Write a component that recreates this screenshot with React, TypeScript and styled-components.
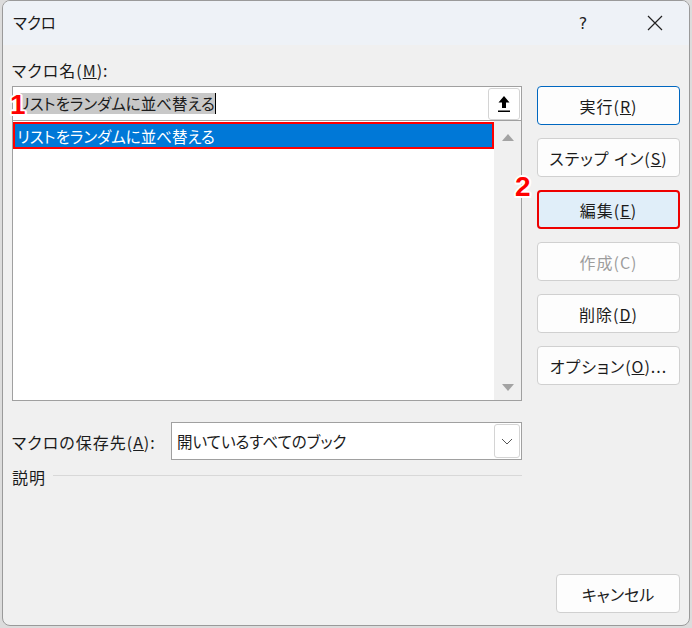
import React from "react";
import styled, { createGlobalStyle } from "styled-components";

const Global = createGlobalStyle`
  html, body { margin: 0; padding: 0; }
  body {
    background: #dcdcdc;
    font-family: "Noto Sans CJK JP", "Noto Sans", sans-serif;
    font-feature-settings: "palt";
    color: #1b1b1b;
  }
  #root { width: 692px; height: 628px; }
`;

const Window = styled.div`
  box-sizing: border-box;
  margin: 0 2px 2px 2px;
  width: 688px;
  height: 626px;
  border: 1px solid #9a9a9a;
  border-radius: 8px;
  background: #f0f0f0;
  display: flex;
  flex-direction: column;
  overflow: hidden;
`;

const TitleBar = styled.div`
  height: 44px;
  background: #eef2f7;
  display: flex;
  align-items: center;
  padding-left: 10px;
  font-size: 15.5px;
  flex: none;
`;

const Title = styled.div`
  flex: 1;
  padding-bottom: 2px;
`;

const TitleButton = styled.div<{ $w: number }>`
  width: ${(p) => p.$w}px;
  height: 44px;
  display: flex;
  align-items: center;
  justify-content: center;
  font-family: "DejaVu Sans", sans-serif;
  font-size: 16px;
  color: #222;
`;

const Body = styled.div`
  position: relative;
  flex: 1;
  display: flex;
  padding: 0 9px 0 9px;
  gap: 15px;
`;

const Left = styled.div`
  width: 510px;
  display: flex;
  flex-direction: column;
  padding-top: 14px;
`;

const Right = styled.div`
  width: 143px;
  display: flex;
  flex-direction: column;
  padding-top: 41px;
  gap: 13px;
`;

const Label = styled.div`
  font-size: 16px;
  letter-spacing: 1px;
  line-height: 22px;
  height: 22px;
  margin-bottom: 5px;
`;

const NameInput = styled.div`
  box-sizing: border-box;
  height: 34px;
  border: 1px solid #a0a0a0;
  border-bottom: none;
  background: #fff;
  display: flex;
  align-items: center;
  padding-left: 4px;
  padding-right: 1px;
`;

const Selection = styled.span`
  background: #c8c8c8;
  font-size: 15.5px;
  line-height: 21px;
  height: 21px;
  display: inline-block;
`;

const Caret = styled.span`
  display: inline-block;
  width: 1px;
  height: 21px;
  background: #000;
`;

const Spacer = styled.div`
  flex: 1;
`;

const UpButton = styled.div`
  box-sizing: border-box;
  width: 32px;
  height: 32px;
  margin-top: 1px;
  background: #fff;
  border: 1px solid #d4d4d4;
  border-radius: 3px;
  display: flex;
  align-items: center;
  justify-content: center;
`;

const ListBox = styled.div`
  box-sizing: border-box;
  height: 281px;
  border: 1px solid #a0a0a0;
  background: #fff;
  display: flex;
`;

const Items = styled.div`
  flex: 1;
`;

const Item = styled.div<{ $selected?: boolean }>`
  box-sizing: border-box;
  height: 27px;
  margin-top: 1px;
  padding-left: 2px;
  display: flex;
  align-items: center;
  font-size: 15.5px;
  background: ${(p) => (p.$selected ? "#0078d7" : "transparent")};
  color: ${(p) => (p.$selected ? "#fff" : "#000")};
  border: ${(p) => (p.$selected ? "2px solid #ff0000" : "none")};
`;

const ScrollBar = styled.div`
  width: 27px;
  background: #f0f0f0;
  display: flex;
  flex-direction: column;
  justify-content: space-between;
  align-items: center;
  padding: 13px 0 9px;
`;

const Tri = styled.div<{ $down?: boolean }>`
  width: 0;
  height: 0;
  border-left: 6px solid transparent;
  border-right: 6px solid transparent;
  ${(p) =>
    p.$down
      ? "border-top: 7px solid #a3a3a3;"
      : "border-bottom: 7px solid #a3a3a3;"}
`;

const SaveRow = styled.div`
  margin-top: 21px;
  height: 38px;
  display: flex;
  align-items: center;
`;

const SaveLabel = styled.div`
  width: 159px;
  font-size: 16px;
  letter-spacing: 1px;
  padding-top: 2px;
`;

const Select = styled.div`
  box-sizing: border-box;
  flex: 1;
  height: 38px;
  border: 1px solid #a0a0a0;
  background: #fff;
  display: flex;
  align-items: center;
  padding-left: 5px;
  padding-right: 1px;
  font-size: 15.5px;
`;

const DropButton = styled.div`
  box-sizing: border-box;
  width: 26px;
  height: 34px;
  border: 1px solid #d4d4d4;
  border-radius: 3px;
  display: flex;
  align-items: center;
  justify-content: center;
`;

const DescRow = styled.div`
  margin-top: 6px;
  display: flex;
  align-items: center;
  gap: 7px;
  font-size: 16px;
  letter-spacing: 1px;
  line-height: 22px;
`;

const Rule = styled.div`
  flex: 1;
  height: 1px;
  background: #d8d8d8;
  margin-top: -3px;
`;

const Button = styled.div<{ $variant?: "default" | "marked"; $disabled?: boolean }>`
  box-sizing: border-box;
  height: 39px;
  border-radius: 4px;
  display: flex;
  align-items: center;
  justify-content: center;
  font-size: 16px;
  letter-spacing: 1px;
  background: ${(p) => (p.$variant === "marked" ? "#e0eef9" : "#fdfdfd")};
  color: ${(p) => (p.$disabled ? "#9d9d9d" : "#1b1b1b")};
  border: ${(p) =>
    p.$variant === "default"
      ? "1px solid #0067c0"
      : p.$variant === "marked"
      ? "2px solid #ee0000"
      : "1px solid #d0d0d0"};
`;

const Footer = styled.div`
  display: flex;
  justify-content: flex-end;
  padding: 0 9px 12px 0;
  flex: none;
`;

const CancelButton = styled(Button)`
  width: 124px;
  letter-spacing: 0;
`;

const Marker = styled.div<{ $x: number; $y: number }>`
  position: absolute;
  left: ${(p) => p.$x}px;
  top: ${(p) => p.$y}px;
  font-family: "Liberation Sans", Arial, sans-serif;
  font-weight: bold;
  font-size: 28px;
  line-height: 28px;
  color: #ff0000;
  text-shadow: -2px 0 #fff, 2px 0 #fff, 0 -2px #fff, 0 2px #fff,
    -1.5px -1.5px #fff, 1.5px 1.5px #fff, -1.5px 1.5px #fff, 1.5px -1.5px #fff;
`;

const UpArrowIcon = () => (
  <svg width="14" height="18" viewBox="0 0 14 18">
    <polygon points="7,1 12.5,7.5 9,7.5 9,13 5,13 5,7.5 1.5,7.5" fill="#000" />
    <rect x="1" y="15.5" width="12" height="1.5" fill="#000" />
  </svg>
);

const ChevronIcon = () => (
  <svg width="12" height="7" viewBox="0 0 12 7">
    <polyline points="1,1 6,6 11,1" fill="none" stroke="#555" strokeWidth="1" />
  </svg>
);

const CloseIcon = () => (
  <svg width="16" height="16" viewBox="0 0 16 16">
    <path d="M1 1 L15 15 M15 1 L1 15" stroke="#222" strokeWidth="1.2" />
  </svg>
);

export default function App() {
  return (
    <>
      <Global />
      <Window>
        <TitleBar>
          <Title>マクロ</Title>
          <TitleButton $w={120}>?</TitleButton>
          <TitleButton $w={24}>
            <CloseIcon />
          </TitleButton>
          <TitleButton $w={22} />
        </TitleBar>
        <Body>
          <Left>
            <Label>
              マクロ名(<u>M</u>):
            </Label>
            <NameInput>
              <Selection>リストをランダムに並べ替える</Selection>
              <Caret />
              <Spacer />
              <UpButton>
                <UpArrowIcon />
              </UpButton>
            </NameInput>
            <ListBox>
              <Items>
                <Item $selected>リストをランダムに並べ替える</Item>
              </Items>
              <ScrollBar>
                <Tri />
                <Tri $down />
              </ScrollBar>
            </ListBox>
            <SaveRow>
              <SaveLabel>
                マクロの保存先(<u>A</u>):
              </SaveLabel>
              <Select>
                開いているすべてのブック
                <Spacer />
                <DropButton>
                  <ChevronIcon />
                </DropButton>
              </Select>
            </SaveRow>
            <DescRow>
              説明
              <Rule />
            </DescRow>
          </Left>
          <Right>
            <Button $variant="default">
              実行(<u>R</u>)
            </Button>
            <Button>
              ステップ イン(<u>S</u>)
            </Button>
            <Button $variant="marked">
              編集(<u>E</u>)
            </Button>
            <Button $disabled>作成(C)</Button>
            <Button>
              削除(<u>D</u>)
            </Button>
            <Button>
              オプション(<u>O</u>)...
            </Button>
          </Right>
          <Marker $x={7} $y={46}>1</Marker>
          <Marker $x={512} $y={128}>2</Marker>
        </Body>
        <Footer>
          <CancelButton>キャンセル</CancelButton>
        </Footer>
      </Window>
    </>
  );
}
